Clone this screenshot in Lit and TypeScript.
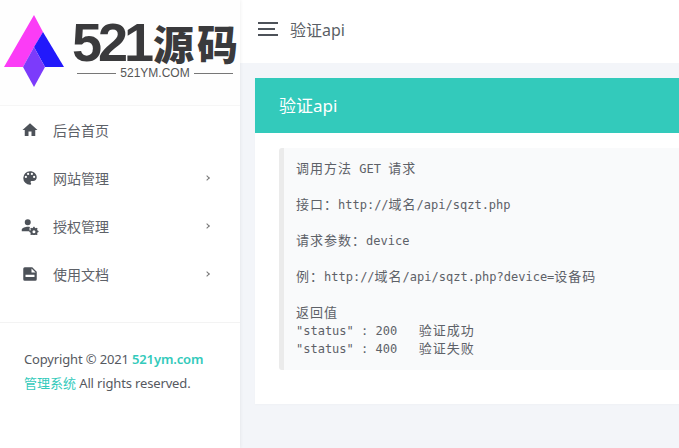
import { LitElement, html, css, svg } from "lit";
import { customElement } from "lit/decorators.js";

const navItems = [
  { label: "后台首页", icon: "M10 20v-6h4v6h5v-8h3L12 3 2 12h3v8z", arrow: false },
  {
    label: "网站管理",
    icon: "M12 3a9 9 0 0 0 0 18c.83 0 1.5-.67 1.5-1.5 0-.39-.15-.74-.39-1.01-.23-.26-.38-.61-.38-.99 0-.83.67-1.5 1.5-1.5H16c2.76 0 5-2.24 5-5 0-4.42-4.03-8-9-8zm-5.5 9a1.5 1.5 0 1 1 0-3 1.5 1.5 0 0 1 0 3zm3-4a1.5 1.5 0 1 1 0-3 1.5 1.5 0 0 1 0 3zm5 0a1.5 1.5 0 1 1 0-3 1.5 1.5 0 0 1 0 3zm3 4a1.5 1.5 0 1 1 0-3 1.5 1.5 0 0 1 0 3z",
    arrow: true,
  },
  {
    label: "授权管理",
    icon: "M9 3a4 4 0 1 1 0 8 4 4 0 0 1 0-8zM9 13c1 0 2 .1 3 .3a6 6 0 0 0 .2 5.700H1v-2c0-2.700 5.300-4 8-4zM18 13l.5 1.400 1.300.5 1.300-.6 1 1.100-.6 1.300.5 1.300 1.400.5v1.500l-1.400.5-.5 1.300.6 1.300-1 1-1.300-.6-1.300.5-.5 1.400h-1.500l-.5-1.400-1.300-.5-1.300.6-1-1 .6-1.300-.5-1.300-1.400-.5v-1.500l1.400-.5.5-1.300-.6-1.300 1-1.100 1.300.6 1.300-.5.5-1.400zM17.250 17.500a2 2 0 1 0 0 4 2 2 0 0 0 0-4z",
    arrow: true,
  },
  {
    label: "使用文档",
    icon: "M5 3h10l6 6v10a2 2 0 0 1-2 2H5a2 2 0 0 1-2-2V5a2 2 0 0 1 2-2zm9 1.500V10h5.500zM6 13v3h12v-3z",
    arrow: true,
  },
];

const codeLines = [
  "调用方法 GET 请求",
  "",
  "接口：http://域名/api/sqzt.php",
  "",
  "请求参数：device",
  "",
  "例：http://域名/api/sqzt.php?device=设备码",
  "",
  "返回值",
  '"status" : 200   验证成功',
  '"status" : 400   验证失败',
];

@customElement("app-root")
export class AppRoot extends LitElement {
  static styles = css`
    :host {
      display: block;
      width: 679px;
      height: 448px;
      overflow: hidden;
      background: #f3f5f9;
      font-family: "Noto Sans", "Open Sans", "Noto Sans CJK SC", sans-serif;
      color: #4d5259;
    }
    .layout {
      display: flex;
      height: 448px;
    }
    .sidebar {
      flex: 0 0 240px;
      background: #fff;
      box-shadow: 1px 0 3px rgba(0, 0, 0, 0.05);
      display: flex;
      flex-direction: column;
      z-index: 1;
    }
    .logo {
      height: 106px;
      box-sizing: border-box;
      padding: 14px 0 0 4px;
      display: flex;
      gap: 7px;
      border-bottom: 1px solid #f6f6f6;
      background: #fefefe;
    }
    .logo svg {
      width: 61px;
      height: 74px;
      flex: none;
    }
    .brand {
      display: flex;
      flex-direction: column;
      width: 167px;
      padding-top: 8px;
    }
    .brand-name {
      height: 43px;
      box-sizing: border-box;
      padding-bottom: 3px;
      display: flex;
      align-items: center;
      color: #3a3a3c;
      white-space: nowrap;
    }
    .brand-num {
      font: 700 54px/40px "Liberation Sans", sans-serif;
      letter-spacing: -4px;
    }
    .brand-cn {
      font: 900 41px/40px "Noto Sans CJK SC", sans-serif;
      letter-spacing: 3px;
      margin-left: 3px;
    }
    .brand-sub {
      display: flex;
      align-items: center;
      gap: 4px;
      margin: 1px 6px 0 5px;
      font: 12px/14px "Liberation Sans", sans-serif;
      color: #555;
    }
    .brand-sub i {
      flex: 1;
      height: 1px;
      background: #777;
    }
    .nav {
      height: 217px;
      box-sizing: border-box;
      border-bottom: 1px solid #f3f3f3;
    }
    .nav-item {
      height: 48px;
      display: flex;
      align-items: center;
      padding: 0 24px 0 21px;
      font-size: 14px;
      color: #5d6168;
    }
    .nav-item svg {
      width: 18px;
      height: 18px;
      fill: #4d5259;
      flex: none;
    }
    .nav-item span {
      margin-left: 14px;
      flex: 1;
    }
    .nav-item b {
      width: 3px;
      height: 3px;
      border-top: 1px solid #777;
      border-right: 1px solid #777;
      transform: rotate(45deg);
      margin-right: 7px;
    }
    .copy {
      padding: 24px 24px 0;
      font-size: 13px;
      line-height: 24px;
      letter-spacing: -0.15px;
      color: #56595f;
    }
    .copy a {
      color: #33cabb;
      font-weight: 600;
    }
    .copy a em {
      font-style: normal;
      font-weight: 400;
      letter-spacing: 0;
    }
    .main {
      flex: 1;
      min-width: 0;
    }
    .topbar {
      height: 63px;
      box-sizing: border-box;
      padding: 0 0 6px 18px;
      background: #fff;
      display: flex;
      align-items: center;
      gap: 12px;
      font-size: 16px;
      color: #5b5f66;
    }
    .burger {
      display: flex;
      flex-direction: column;
      gap: 4px;
      width: 20px;
    }
    .burger i {
      height: 2px;
      background: #4d5259;
    }
    .burger i:nth-child(2) {
      width: 17px;
    }
    .content {
      padding: 15px 0 0 15px;
    }
    .card {
      width: 440px;
      height: 326px;
      background: #fff;
      box-shadow: 0 1px 2px rgba(0, 0, 0, 0.02);
    }
    .card-head {
      height: 55px;
      box-sizing: border-box;
      padding: 0 0 3px 24px;
      background: #33cabb;
      color: #fff;
      display: flex;
      align-items: center;
      font-size: 17px;
    }
    .card-body {
      padding: 15px 0 0 24px;
    }
    .code {
      height: 222px;
      box-sizing: border-box;
      padding: 11px 0 0 12px;
      border-left: 5px solid #ebebeb;
      border-radius: 3px 0 0 3px;
      background: #f9fafb;
      font: 12px/18px "DejaVu Sans Mono", "Noto Sans CJK SC", monospace;
      color: #5d6168;
    }
    .line {
      height: 18px;
      white-space: pre;
    }
    .cjk {
      font: 13px/18px "Noto Sans CJK SC", sans-serif;
      letter-spacing: 1px;
    }
  `;

  private renderLogo() {
    return html`<svg viewBox="0 0 61 74" aria-hidden="true">
      ${svg`<polygon points="30,1 0,53 19,53 30,33 39,18" fill="#fb3cf6" />
      <polygon points="39,18 60,53 41,53 30,33" fill="#2219fb" />
      <polygon points="30,33 41,53 30,73 19,53" fill="#7c3bfb" />`}
    </svg>`;
  }

  // Chinese runs are set wider than the mono latin, 14px per character
  private renderLine(text: string) {
    const parts = text.split(/([\u3000-\u9fff\uff00-\uffef]+)/);
    return html`<div class="line">${parts.map((part, i) =>
      i % 2 ? html`<span class="cjk">${part}</span>` : part,
    )}</div>`;
  }

  render() {
    return html`
      <div class="layout">
        <aside class="sidebar">
          <div class="logo">
            ${this.renderLogo()}
            <div class="brand">
              <div class="brand-name">
                <span class="brand-num">521</span><span class="brand-cn">源码</span>
              </div>
              <div class="brand-sub"><i></i>521YM.COM<i></i></div>
            </div>
          </div>
          <nav class="nav">
            ${navItems.map(
              (item) => html`
                <div class="nav-item">
                  <svg viewBox="0 0 24 24"><path d=${item.icon}></path></svg>
                  <span>${item.label}</span>
                  ${item.arrow ? html`<b></b>` : ""}
                </div>
              `,
            )}
          </nav>
          <div class="copy">
            Copyright © 2021 <a>521ym.com<em>管理系统</em></a> All rights reserved.
          </div>
        </aside>
        <div class="main">
          <header class="topbar">
            <div class="burger"><i></i><i></i><i></i></div>
            <span>验证api</span>
          </header>
          <div class="content">
            <section class="card">
              <div class="card-head">验证api</div>
              <div class="card-body">
                <div class="code">${codeLines.map((l) => this.renderLine(l))}</div>
              </div>
            </section>
          </div>
        </div>
      </div>
    `;
  }
}
